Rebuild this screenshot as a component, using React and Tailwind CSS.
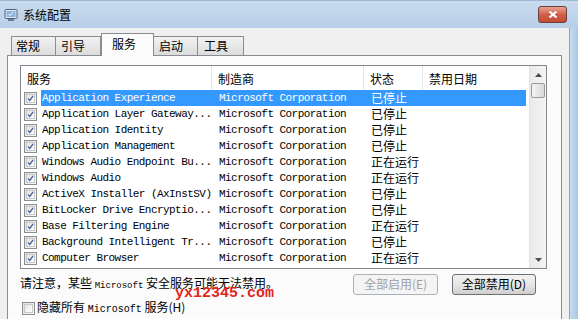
import React from 'react';

const cjk = "font-['Noto_Sans_CJK_SC',sans-serif]";
const mono = "font-['Liberation_Mono','Noto_Sans_CJK_SC',monospace]";

const services = [
  ['Application Experience', '已停止'],
  ['Application Layer Gateway...', '已停止'],
  ['Application Identity', '已停止'],
  ['Application Management', '已停止'],
  ['Windows Audio Endpoint Bu...', '正在运行'],
  ['Windows Audio', '正在运行'],
  ['ActiveX Installer (AxInstSV)', '已停止'],
  ['BitLocker Drive Encryptio...', '已停止'],
  ['Base Filtering Engine', '正在运行'],
  ['Background Intelligent Tr...', '已停止'],
  ['Computer Browser', '正在运行'],
];

const tabs = [
  { label: '常规', w: 'w-[45px]', pl: 'pl-[4px]' },
  { label: '引导', w: 'w-[46px]', pl: 'pl-[5px]' },
  { label: '服务', w: 'w-[53px]', pl: 'pl-[10px]', active: true },
  { label: '启动', w: 'w-[45px]', pl: 'pl-[5px]' },
  { label: '工具', w: 'w-[47px]', pl: 'pl-[6px]' },
];

// small win7 style checkbox
const CheckBox = ({ checked = true }) => (
  <div className="w-[13px] h-[13px] border border-[#8e8f8f] bg-gradient-to-br from-[#dcdcdc] to-[#fbfbfb] p-[1px] shrink-0">
    <div className="w-full h-full border border-[#c9c9c9] bg-gradient-to-br from-[#e6e6e6] to-[#ffffff] relative">
      {checked && (
        <svg viewBox="0 0 9 9" className="absolute inset-0 w-full h-full">
          <path d="M1.5 4.5 L3.6 7 L7.8 1.2" fill="none" stroke="#3f5d96" strokeWidth="1.6" />
        </svg>
      )}
    </div>
  </div>
);

const App = () => {
  return (
    <div className="relative w-[578px] h-[319px] overflow-hidden bg-[#f0f0f0] flex flex-col">
      {/* title bar */}
      <div className="h-[28px] shrink-0 flex items-center bg-gradient-to-b from-[#c9dbee] to-[#b7cfe8] border-t border-[#9fb8d2]">
        <svg viewBox="0 0 14 14" className="w-[14px] h-[14px] ml-[4px] mt-[1px]">
          <rect x="1" y="1.5" width="12" height="9" rx="1" fill="#dfe9f5" stroke="#50627c" />
          <rect x="2.5" y="3" width="9" height="6" fill="#8fb2da" />
          <path d="M4.5 6 L6 7.5 L9 4.2" fill="none" stroke="#ffffff" strokeWidth="1" />
          <rect x="4" y="11" width="6" height="2" fill="#6d7c90" />
        </svg>
        <span className={`${cjk} text-[12px] text-black ml-[5px] leading-none`}>系统配置</span>
        <div className="ml-auto mr-[11px] w-[29px] h-[17px] rounded-[3px] border border-[#6b3d3d] bg-gradient-to-b from-[#e8a493] via-[#d0604a] to-[#c54a33] flex items-center justify-center">
          <svg viewBox="0 0 10 9" className="w-[10px] h-[9px]">
            <path d="M1.5 1.5 L8.5 7.5 M8.5 1.5 L1.5 7.5" stroke="#ffffff" strokeWidth="2.2" />
          </svg>
        </div>
      </div>

      <div className="flex flex-1 min-h-0">
        {/* client */}
        <div className="flex-1 flex flex-col pl-[7px] pr-[7px]">
          {/* tabs */}
          <div className="h-[27px] shrink-0 flex items-end pl-[4px]">
            {tabs.map((t) => (
              <div
                key={t.label}
                className={`${t.w} ${t.pl} ${cjk} text-[12px] text-black border border-b-0 border-[#898c95] ${
                  t.active
                    ? 'h-[23px] bg-[#fbfbfb] relative z-10 -mb-[1px] pt-[1px]'
                    : 'h-[19px] bg-gradient-to-b from-[#f2f2f2] to-[#dcdcdc] -ml-[1px] first:ml-0 pt-[0px]'
                } leading-[17px]`}
              >
                {t.label}
              </div>
            ))}
          </div>

          {/* tab page */}
          <div className="flex-1 bg-[#fbfbfb] border border-b-0 border-[#898c95] pl-[12px] pr-[13px] pt-[9px] flex flex-col">
            {/* list view */}
            <div className="w-[527px] h-[204px] shrink-0 border border-[#828790] bg-white flex overflow-hidden">
              <div className="flex-1 flex flex-col overflow-hidden">
                <div className={`h-[24px] shrink-0 flex ${cjk} text-[12px] text-black`}>
                  <div className="w-[191px] pl-[6px] leading-[25px] border-r border-[#e5e5e5]">服务</div>
                  <div className="w-[152px] pl-[6px] leading-[25px] border-r border-[#e5e5e5]">制造商</div>
                  <div className="w-[59px] pl-[6px] leading-[25px] border-r border-[#e5e5e5]">状态</div>
                  <div className="flex-1 pl-[6px] leading-[25px]">禁用日期</div>
                </div>
                {services.map(([name, status], i) => (
                  <div key={name} className="h-[16px] shrink-0 flex items-center">
                    <div className="w-[20px] pl-[3px] flex items-center">
                      <CheckBox />
                    </div>
                    <div
                      className={`flex-1 mr-[3px] h-[16px] flex items-center ${
                        i === 0 ? 'bg-[#3399ff] text-white' : 'text-black'
                      }`}
                    >
                      <div className={`w-[171px] pl-[1px] ${mono} text-[11px] tracking-[-0.55px] leading-[16px] whitespace-pre`}>{name}</div>
                      <div className={`w-[152px] pl-[7px] ${mono} text-[11px] tracking-[-0.55px] leading-[16px] whitespace-pre`}>Microsoft Corporation</div>
                      <div className={`w-[59px] pl-[7px] ${cjk} text-[12px] leading-[16px]`}>{status}</div>
                      <div className="flex-1" />
                    </div>
                  </div>
                ))}
                {/* next row, scrolled mostly out of view */}
                <div className="h-[16px] shrink-0 flex items-center">
                  <div className="w-[20px] pl-[3px] flex items-center">
                    <CheckBox />
                  </div>
                </div>
              </div>
              {/* scrollbar */}
              <div className="w-[17px] shrink-0 bg-gradient-to-r from-[#eaeaea] to-[#f4f4f4] border-l border-[#e3e3e3] flex flex-col">
                <div className="h-[17px] flex items-center justify-center">
                  <svg viewBox="0 0 7 4" className="w-[7px] h-[4px]"><path d="M0 4 L3.5 0 L7 4Z" fill="#4d4d4d" /></svg>
                </div>
                <div className="h-[15px] mx-[1px] rounded-[2px] border border-[#9a9a9a] bg-gradient-to-r from-[#f3f3f3] to-[#d9d9d9]" />
                <div className="flex-1" />
                <div className="h-[17px] flex items-center justify-center">
                  <svg viewBox="0 0 7 4" className="w-[7px] h-[4px]"><path d="M0 0 L3.5 4 L7 0Z" fill="#4d4d4d" /></svg>
                </div>
              </div>
            </div>

            {/* notice + buttons */}
            <div className="h-[26px] mt-[2px] shrink-0 flex items-center">
              <div className={`${cjk} text-[12px] leading-[16px] text-black whitespace-pre`}>
                请注意，某些 <span className={`${mono} text-[9px]`}>Microsoft</span> 安全服务可能无法禁用。
              </div>
              <div className="ml-auto mr-[12px] flex gap-[14px]">
                <div className={`w-[85px] h-[21px] rounded-[3px] border border-[#adb2b5] bg-[#f4f4f4] ${cjk} text-[12px] leading-[16px] text-[#a0a0a0] flex items-center justify-center`}>
                  全部启用(E)
                </div>
                <div className={`w-[84px] h-[21px] rounded-[3px] border border-[#707070] bg-gradient-to-b from-[#f2f2f2] via-[#e6e6e6] to-[#cfcfcf] ${cjk} text-[12px] leading-[16px] text-black flex items-center justify-center`}>
                  全部禁用(D)
                </div>
              </div>
            </div>

            {/* hide checkbox */}
            <div className="h-[16px] mt-[3px] shrink-0 flex items-center pl-[2px] gap-[2px]">
              <CheckBox checked={false} />
              <span className={`${cjk} text-[12px] leading-[16px] text-black whitespace-pre`}>
                隐藏所有 <span className={`${mono} text-[10px]`}>Microsoft</span> 服务(H)
              </span>
            </div>
          </div>
        </div>

        {/* right window frame */}
        <div className="w-[9px] shrink-0 border-l border-[#8aa4c0] bg-gradient-to-r from-[#c6dcf0] to-[#a9c8e4]" />
      </div>

      {/* watermark */}
      <div className={`absolute left-[175px] top-[286px] ${mono} font-bold text-[15px] text-[#e4261c] leading-none`}>
        yx12345.com
      </div>
    </div>
  );
};

export default App;
